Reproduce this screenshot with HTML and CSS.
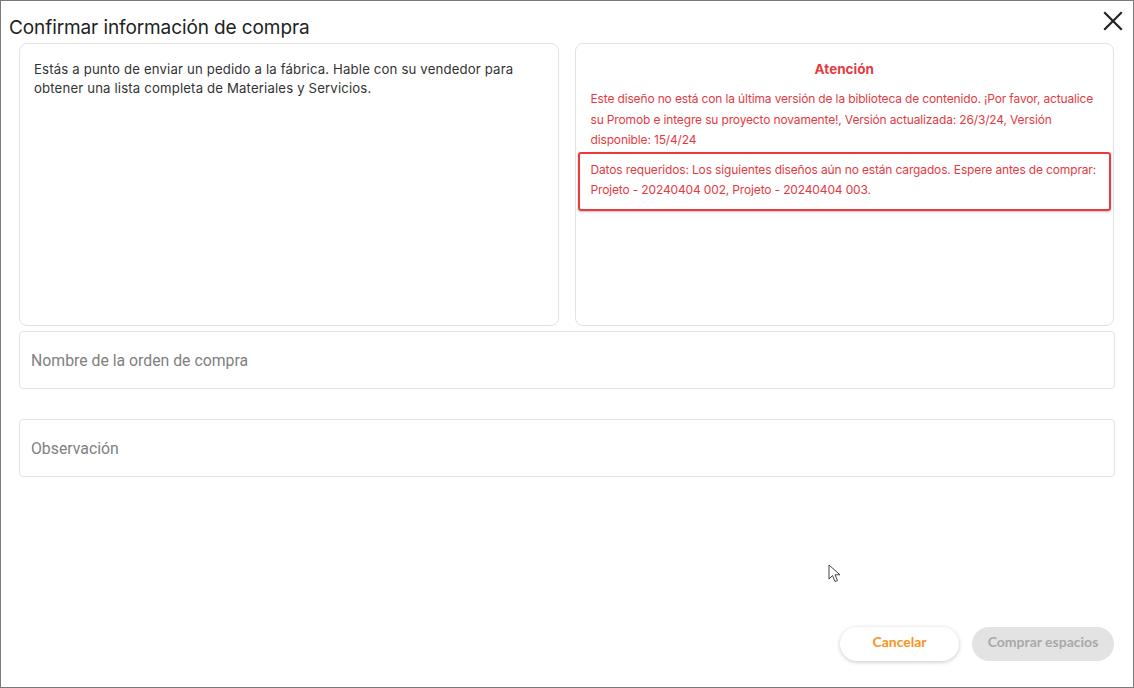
FILE: index.html
```html
<!DOCTYPE html>
<html lang="es">
<head>
<meta charset="utf-8">
<title>Confirmar información de compra</title>
<link rel="stylesheet" href="styles.css">
</head>
<body>
<div class="dialog">
  <header class="dialog-header">
    <h1 class="dialog-title">Confirmar información de compra</h1>
    <button class="close-btn" aria-label="Cerrar">
      <svg width="20" height="20" viewBox="0 0 20 20"><path d="M2 2 L18 18 M18 2 L2 18" stroke="#222" stroke-width="2.2" stroke-linecap="square"/></svg>
    </button>
  </header>
  <div class="cards">
    <section class="card info-card">
      <p>Estás a punto de enviar un pedido a la fábrica. Hable con su vendedor para obtener una lista completa de Materiales y Servicios.</p>
    </section>
    <section class="card warn-card">
      <h2 class="warn-title">Atención</h2>
      <p class="warn-text">Este diseño no está con la última versión de la biblioteca de contenido. ¡Por favor, actualice su Promob e integre su proyecto novamente!, Versión actualizada: 26/3/24, Versión disponible: 15/4/24</p>
      <div class="warn-box">Datos requeridos: Los siguientes diseños aún no están cargados. Espere antes de comprar: Projeto - 20240404 002, Projeto - 20240404 003.</div>
    </section>
  </div>
  <div class="field field-name"><span class="placeholder">Nombre de la orden de compra</span></div>
  <div class="field field-obs"><span class="placeholder">Observación</span></div>
  <div class="spacer"></div>
  <footer class="actions">
    <button class="btn btn-cancel">Cancelar</button>
    <button class="btn btn-buy" disabled>Comprar espacios</button>
  </footer>
  <svg class="cursor" width="14" height="20" viewBox="0 0 14 20"><path d="M1 1 L1 15 L4.5 11.5 L7 17.5 L9.5 16.5 L7 10.8 L12 10.8 Z" fill="#fff" stroke="#444" stroke-width="1" stroke-linejoin="round"/></svg>
</div>
</body>
</html>
```

FILE: styles.css
```css
* { box-sizing: border-box; }
html, body { margin: 0; padding: 0; background: #fff; }
.dialog {
  position: relative;
  width: 1134px;
  height: 688px;
  border: 1px solid #7b7b7b;
  background: #fff;
  display: flex;
  flex-direction: column;
  padding: 0 19px 26px 18px;
  font-family: Inter, "Noto Sans", sans-serif;
}
.dialog-header {
  display: flex;
  align-items: flex-start;
  justify-content: space-between;
  height: 42px;
  margin: 0 -9px 0 -10px;
}
.dialog-title {
  margin: 14px 0 0 0;
  font-size: 19px;
  font-weight: 400;
  line-height: 26px;
  color: #222;
  letter-spacing: -0.1px;
}
.close-btn {
  background: none;
  border: 0;
  padding: 0;
  margin: 10px 0 0 0;
  width: 20px;
  height: 20px;
  cursor: pointer;
}
.close-btn svg { display: block; }
.cards {
  display: grid;
  grid-template-columns: 1fr 1fr;
  gap: 16px;
  height: 283px;
}
.card {
  border: 1px solid #e2e2e2;
  border-radius: 8px;
  background: #fff;
}
.info-card { padding: 16px 14px; }
.info-card p {
  margin: 0;
  font-size: 13.2px;
  line-height: 19px;
  color: #333;
  letter-spacing: 0.15px;
}
.warn-card { padding: 16px 2px 0 2px; color: #e23b3f; }
.warn-title {
  margin: 0 0 11px 0;
  text-align: center;
  font-size: 13.5px;
  font-weight: 700;
  line-height: 18px;
}
.warn-text {
  margin: 0 0 1px 0;
  padding: 0 13px;
  font-size: 12px;
  line-height: 20.5px;
  letter-spacing: -0.15px;
}
.warn-box {
  border: 2px solid #ea3a3d;
  border-radius: 3px;
  padding: 6px 4px 8px 11px;
  font-size: 12px;
  line-height: 20.5px;
  letter-spacing: -0.15px;
  box-shadow: 0 1px 2px rgba(0,0,0,0.25);
}
.field {
  border: 1px solid #e2e2e2;
  border-radius: 4px;
  height: 58px;
  display: flex;
  align-items: center;
  padding: 0 11px;
  margin-right: -1px;
}
.field-name { margin-top: 5px; }
.field-obs { margin-top: 30px; }
.placeholder {
  font-family: Roboto, "Noto Sans", sans-serif;
  font-size: 15.8px;
  color: #808080;
}
.spacer { flex: 1; }
.actions {
  display: flex;
  justify-content: flex-end;
  gap: 13px;
}
.btn {
  font-family: Lato, "Noto Sans", sans-serif;
  font-size: 14px;
  font-weight: 700;
  height: 34px;
  line-height: 30px;
  padding: 0 0 4px 0;
  border-radius: 17px;
  border: 0;
}
.btn-cancel {
  width: 119px;
  background: #fff;
  color: #f7941d;
  box-shadow: 0 1px 4px rgba(0,0,0,0.22);
}
.btn-buy {
  width: 142px;
  background: #e3e3e3;
  color: #a9a9a9;
}
.cursor {
  position: absolute;
  left: 827px;
  top: 563px;
}
```
